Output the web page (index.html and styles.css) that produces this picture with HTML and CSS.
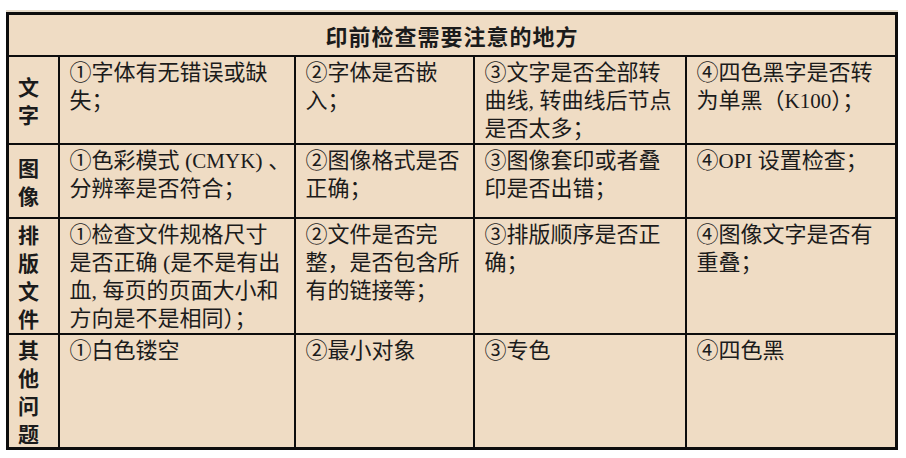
FILE: index.html
```html
<!DOCTYPE html>
<html lang="zh-CN">
<head>
<meta charset="utf-8">
<title>印前检查需要注意的地方</title>
<link rel="stylesheet" href="styles.css">
</head>
<body>
<div class="page">
  <table class="check">
    <colgroup>
      <col class="c-label">
      <col class="c-1">
      <col class="c-2">
      <col class="c-3">
      <col class="c-4">
    </colgroup>
    <thead>
      <tr class="r-head">
        <th colspan="5" class="title">印前检查需要注意的地方</th>
      </tr>
    </thead>
    <tbody>
      <tr class="r-1">
        <th class="label">文<br>字</th>
        <td>①字体有无错误或缺<br>失；</td>
        <td>②字体是否嵌<br>入；</td>
        <td>③文字是否全部转<br>曲线, 转曲线后节点<br>是否太多；</td>
        <td>④四色黑字是否转<br>为单黑（<span class="lat">K100</span>）；</td>
      </tr>
      <tr class="r-2">
        <th class="label">图<br>像</th>
        <td>①色彩模式 (<span class="lat">CMYK</span>) 、<br>分辨率是否符合；</td>
        <td>②图像格式是否<br>正确；</td>
        <td>③图像套印或者叠<br>印是否出错；</td>
        <td>④<span class="lat">OPI</span> 设置检查；</td>
      </tr>
      <tr class="r-3">
        <th class="label">排<br>版<br>文<br>件</th>
        <td>①检查文件规格尺寸<br>是否正确 (是不是有出<br>血, 每页的页面大小和<br>方向是不是相同）；</td>
        <td>②文件是否完<br>整，是否包含所<br>有的链接等；</td>
        <td>③排版顺序是否正<br>确；</td>
        <td>④图像文字是否有<br>重叠；</td>
      </tr>
      <tr class="r-4">
        <th class="label">其<br>他<br>问<br>题</th>
        <td>①白色镂空</td>
        <td>②最小对象</td>
        <td>③专色</td>
        <td>④四色黑</td>
      </tr>
    </tbody>
  </table>
</div>
</body>
</html>
```

FILE: styles.css
```css
html, body {
  margin: 0;
  padding: 0;
  background: #ffffff;
}

.page {
  padding: 12px 0 0 6px;
}

.check {
  border-collapse: collapse;
  table-layout: fixed;
  width: 889px;
  background: #efdcc4;
  border: 3px solid #0d0d0d;
  box-shadow: 0 -2px 0 #e6dccb;
  color: #1b1b1b;
}

.c-label { width: 51px; }
.c-1 { width: 236px; }
.c-2 { width: 179px; }
.c-3 { width: 212px; }
.c-4 { width: 211px; }

.check th,
.check td {
  border: 2px solid #0d0d0d;
  padding: 0;
}

.title {
  font-family: "Noto Sans CJK SC", "Liberation Sans", sans-serif;
  font-weight: 700;
  font-size: 22px;
  letter-spacing: 1px;
  text-align: center;
  vertical-align: middle;
  line-height: 30px;
}

.label {
  font-family: "Noto Sans CJK SC", "Liberation Sans", sans-serif;
  font-weight: 700;
  font-size: 21px;
  line-height: 28px;
  text-align: left;
  vertical-align: middle;
  padding-left: 9px !important;
}

.check td {
  font-family: "Liberation Serif", "Noto Sans CJK SC", serif;
  font-weight: 400;
  font-size: 22px;
  line-height: 28px;
  vertical-align: top;
  padding: 2px 6px 0 10px;
  text-align: left;
  white-space: nowrap;
}

.lat {
  font-family: "Liberation Serif", serif;
  font-size: 21px;
}

.r-head { height: 42px; }
.r-1 { height: 86px; }
.r-2 { height: 74px; }
.r-3 { height: 114px; }
.r-4 { height: 115px; }
```
